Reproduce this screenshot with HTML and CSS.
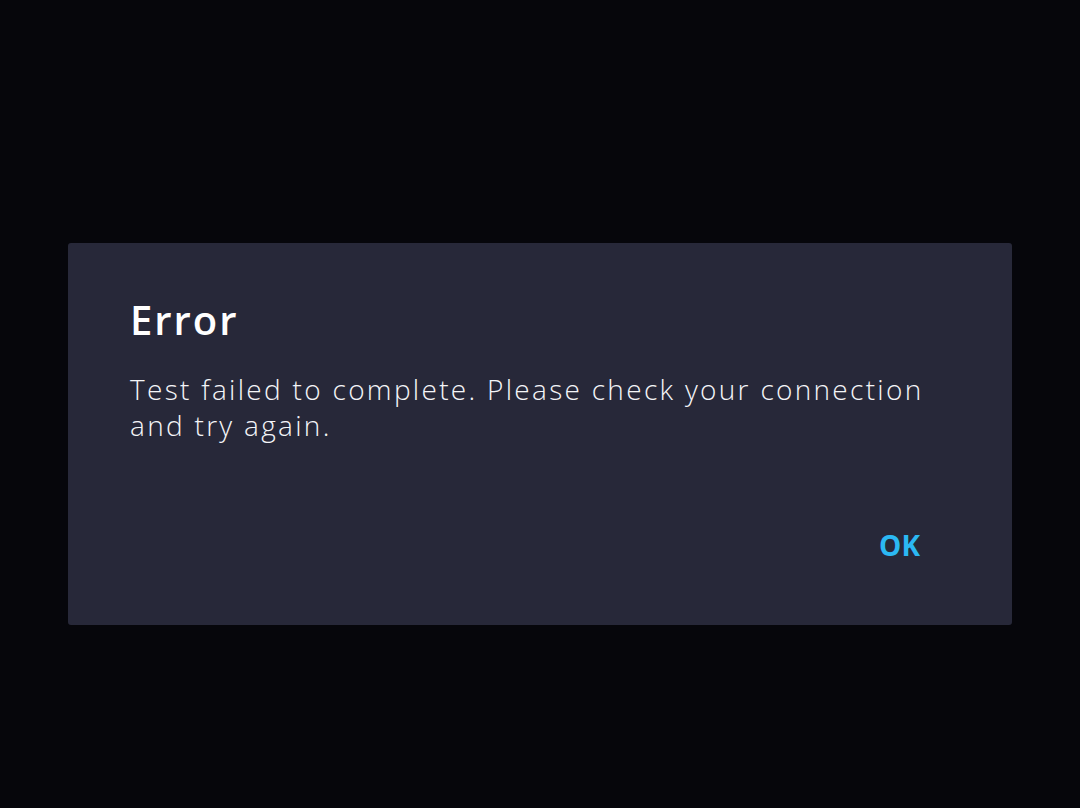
FILE: index.html
```html
<!DOCTYPE html>
<html>
<head>
<meta charset="utf-8">
<link rel="stylesheet" href="styles.css">
</head>
<body>
<div class="page">
  <div class="dialog">
    <h1 class="title">Error</h1>
    <p class="message">Test failed to complete. Please check your connection and try again.</p>
    <div class="actions">
      <button class="ok">OK</button>
    </div>
  </div>
</div>
</body>
</html>
```
FILE: styles.css
```css
html, body {
  margin: 0;
  padding: 0;
  background: #06060b;
  font-family: "Open Sans", Lato, sans-serif;
}
.page {
  width: 1080px;
  height: 808px;
  display: flex;
  align-items: center;
  justify-content: center;
}
.dialog {
  width: 944px;
  height: 382px;
  box-sizing: border-box;
  margin-top: 60px;
  background: #272839;
  border-radius: 3px;
  padding: 50px 82px 0 62px;
  display: flex;
  flex-direction: column;
}
.title {
  margin: 0;
  color: #ffffff;
  font-size: 40px;
  font-weight: 600;
  line-height: 54px;
  letter-spacing: 2px;
}
.message {
  margin: 24px 0 0 0;
  color: #f4f5f8;
  font-size: 28px;
  font-weight: 300;
  line-height: 36px;
  letter-spacing: 2.3px;
}
.actions {
  display: flex;
  justify-content: flex-end;
  margin-top: 84px;
  padding-right: 10px;
}
.ok {
  background: none;
  border: none;
  padding: 0;
  color: #2bb8f3;
  font-family: inherit;
  font-size: 28px;
  font-weight: 700;
  line-height: 36px;
}
```
